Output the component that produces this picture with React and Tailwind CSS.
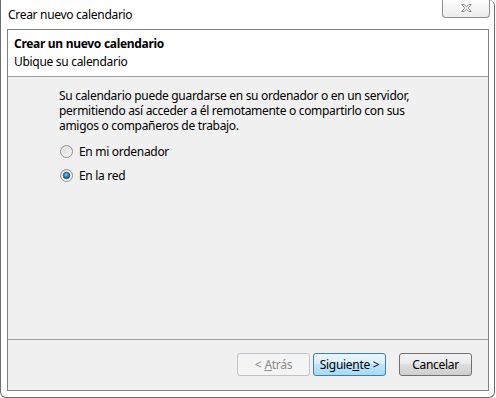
import React from 'react';

const font = { fontFamily: '"Noto Sans", "Open Sans", sans-serif' };

const Radio = ({ checked }) => (
  <svg width="13" height="13" viewBox="0 0 13 13" className="shrink-0">
    <defs>
      <linearGradient id="rbg" x1="0" y1="0" x2="1" y2="1">
        <stop offset="0" stopColor="#d2d2d2" />
        <stop offset="1" stopColor="#fbfbfb" />
      </linearGradient>
      <radialGradient id="dot" cx="0.45" cy="0.4" r="0.6">
        <stop offset="0" stopColor="#9ad9fa" />
        <stop offset="0.45" stopColor="#2a8ad0" />
        <stop offset="1" stopColor="#12466f" />
      </radialGradient>
    </defs>
    <circle cx="6.5" cy="6.5" r="6" fill="url(#rbg)" stroke="#8e8f8f" strokeWidth="1" />
    <circle cx="6.5" cy="6.5" r="4.5" fill="none" stroke="#f4f4f4" strokeWidth="1" />
    {checked && <circle cx="6.5" cy="6.5" r="3.3" fill="url(#dot)" stroke="#1c4f7a" strokeWidth="0.6" />}
  </svg>
);

const Btn = ({ children, variant }) => {
  const styles = {
    disabled: 'border-[#bfc4c8] bg-[#f4f4f4] text-[#8a8a8a]',
    primary: 'border-[#3c7fb1] bg-[linear-gradient(#eaf6fd_0%,#d9f0fc_45%,#bee6fd_50%,#a7d9f5_100%)] text-black',
    normal: 'border-[#707070] bg-[linear-gradient(#f2f2f2_0%,#ebebeb_45%,#dddddd_50%,#cfcfcf_100%)] text-black',
  };
  return (
    <button
      className={`w-[73px] h-[23px] rounded-[3px] border text-[12px] leading-[15px] tracking-[-0.3px] flex items-center justify-center ${styles[variant]}`}
      style={font}
    >
      {children}
    </button>
  );
};

export default function App() {
  return (
    <div className="w-[496px] h-[398px] bg-white text-[12px] leading-[15px] tracking-[-0.3px] text-black" style={font}>
      <div className="w-[495px] h-[398px] border-x border-b border-[#6d6d6d] rounded-tr-[6px] rounded-b-[6px] flex flex-col bg-white">
        {/* title bar */}
        <div className="h-[29px] flex items-start justify-between pl-[7px] pr-[4px]">
          <span className="pt-[7px]">Crear nuevo calendario</span>
          <div className="w-[48px] h-[19px] -mt-[1px] border border-t-0 border-[#8f8f8f] rounded-b-[4px] bg-[linear-gradient(#ffffff,#ececec)] flex items-center justify-center">
            <svg width="11" height="8" viewBox="0 0 11 8">
              <path
                d="M0.5 0.5 H3 L5.5 2.6 L8 0.5 H10.5 L7.2 4 L10.5 7.5 H8 L5.5 5.4 L3 7.5 H0.5 L3.8 4 Z"
                fill="#f2f2f2"
                stroke="#9a9a9a"
                strokeWidth="1"
                strokeLinejoin="round"
              />
            </svg>
          </div>
        </div>

        {/* client area */}
        <div className="ml-[6px] w-[482px] h-[362px] border border-[#828282] flex flex-col">
          <div className="h-[47px] bg-white border-b border-[#a0a0a0] pl-[6px] pt-[5px] leading-[18px]">
            <div className="font-bold">Crear un nuevo calendario</div>
            <div>Ubique su calendario</div>
          </div>

          <div className="h-[263px] bg-[#f0f0f0] border-b border-[#a0a0a0] pl-[51px] pt-[11px]">
            <p className="whitespace-nowrap">
              Su calendario puede guardarse en su ordenador o en un servidor,
              <br />
              permitiendo así acceder a él remotamente o compartirlo con sus
              <br />
              amigos o compañeros de trabajo.
            </p>
            <div className="mt-[6px] flex flex-col">
              <label className="h-[24px] flex items-center gap-[6px] pl-[1px]">
                <Radio />
                <span>En mi ordenador</span>
              </label>
              <label className="h-[24px] flex items-center gap-[6px] pl-[1px]">
                <Radio checked />
                <span>En la red</span>
              </label>
            </div>
          </div>

          <div className="flex-1 bg-[#f0f0f0] flex justify-end items-start pt-[13px] pr-[16px]">
            <Btn variant="disabled">
              &lt; <span className="underline ml-[3px]">A</span>trás
            </Btn>
            <div className="w-[3px]" />
            <Btn variant="primary">
              Siguie<span className="underline">n</span>te &gt;
            </Btn>
            <div className="w-[13px]" />
            <Btn variant="normal">Cancelar</Btn>
          </div>
        </div>
      </div>
    </div>
  );
}
